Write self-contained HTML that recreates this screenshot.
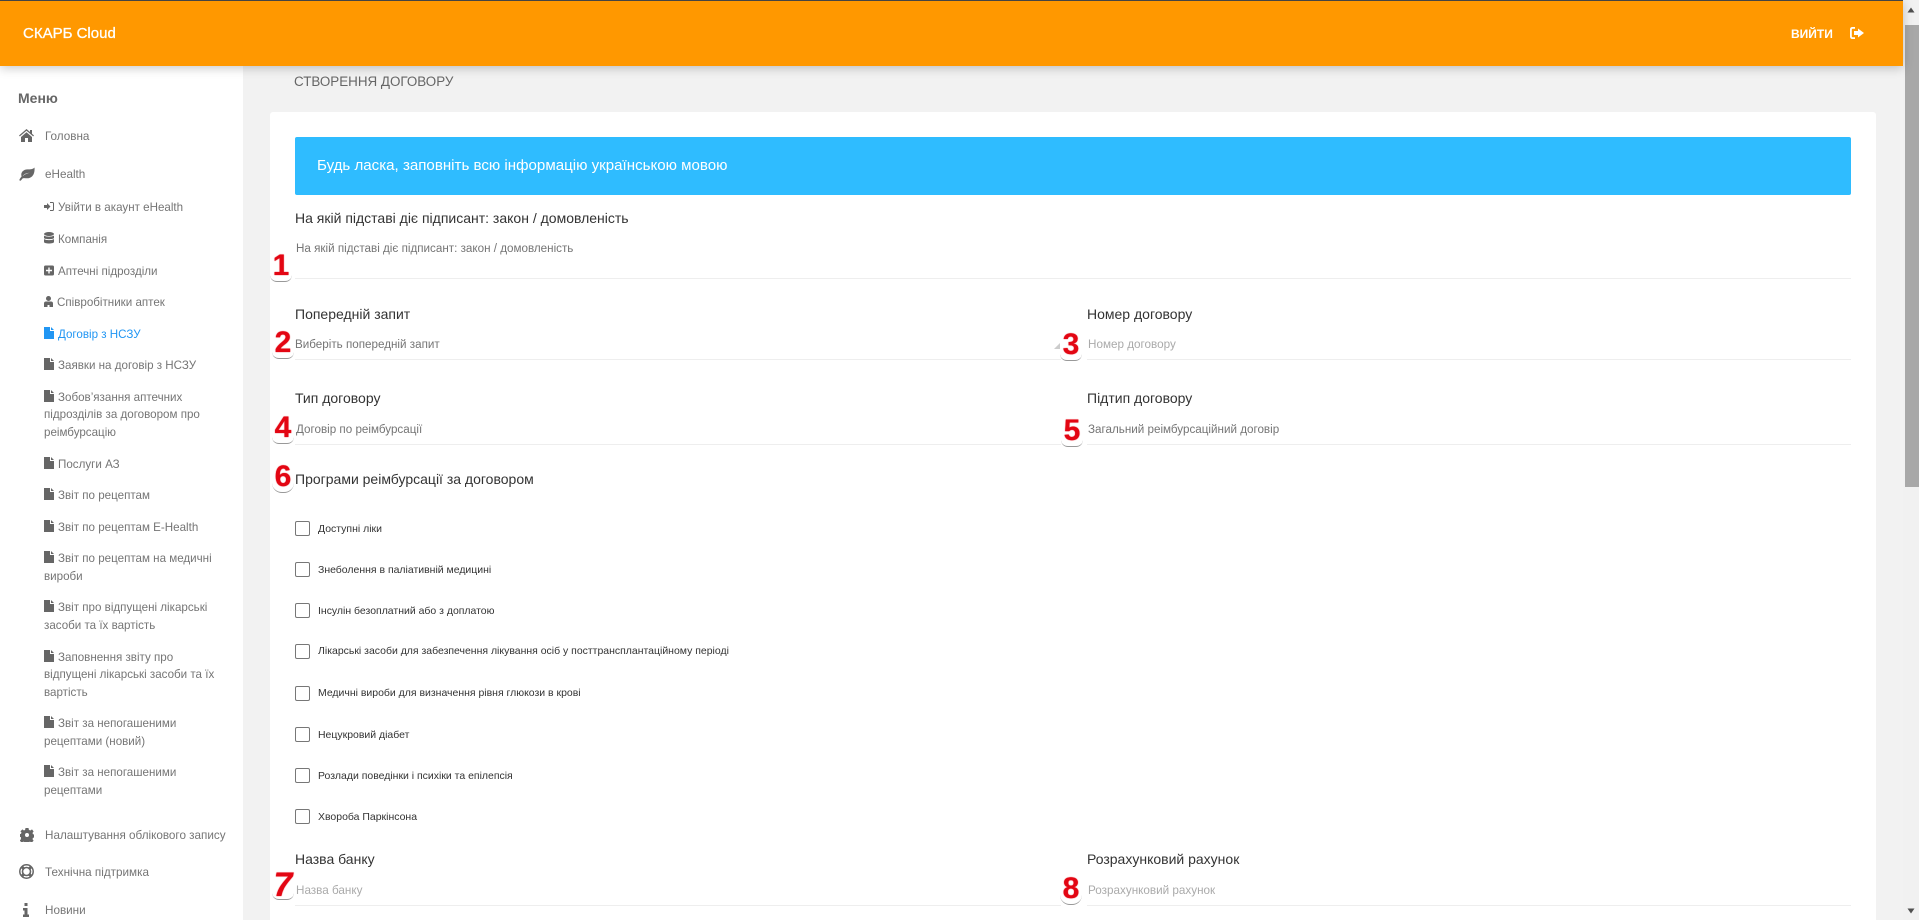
<!DOCTYPE html>
<html lang="uk">
<head>
<meta charset="utf-8">
<title>СКАРБ Cloud</title>
<style>
html,body{margin:0;padding:0;width:1919px;height:920px;overflow:hidden;background:#f2f2f2;font-family:"Liberation Sans","Noto Sans CJK SC",sans-serif}
.a{position:absolute}
.t{position:absolute;white-space:nowrap;line-height:18px;height:18px}
#hdr{left:0;top:0;width:1903px;height:66px;background:#ff9800;border-top:1px solid #444;box-sizing:border-box;box-shadow:0 2px 10px rgba(0,0,0,.22);z-index:3}
#side{left:0;top:66px;width:243px;height:854px;background:#fff}
#card{left:270px;top:112px;width:1606px;height:808px;background:#fff;border-radius:3px 3px 0 0}
#alert{left:295px;top:137px;width:1556px;height:58px;background:#2fbcff;border-radius:2px}
.m{font-size:11.7px;color:#757575}
.s{font-size:11.6px;color:#757575;left:44px}
.s svg{display:inline-block;vertical-align:-1px;margin-right:4px}
.l{font-size:14px;color:#333}
.v{font-size:11.65px;color:#757575}
.p{font-size:11.7px;color:#aaa}
.line{position:absolute;height:1px;background:#eee}
.cb{position:absolute;left:295px;width:13px;height:13px;border:1px solid #777;border-radius:2px;background:#fff}
.c{font-size:10.47px;color:#333;left:318px}
.n{position:absolute;width:22px;height:30px;font-size:30px;line-height:28px;font-weight:bold;color:#e30613;text-align:center;background:#fff;border-radius:0 0 7px 7px;border-bottom:1px solid #999;box-sizing:border-box;z-index:2;text-shadow:0 0 1px #e30613}
</style>
</head>
<body>
<div class="a" id="side"></div>
<div class="a" id="hdr"></div>
<div class="t" style="left:23px;top:25px;font-size:15px;color:#fff;z-index:4;-webkit-text-stroke:.3px #fff">СКАРБ Cloud</div>
<div class="t" style="left:1791px;top:25px;font-size:12px;font-weight:bold;color:#fff;z-index:4">ВИЙТИ</div>
<svg class="a" style="left:1849px;top:26px;z-index:4" width="16" height="14" viewBox="0 0 16 14"><path fill="#fff" d="M1 3.500Q1 1 3.500 1H6v1.800H3.600Q2.800 2.800 2.800 3.600v6.800q0 .8.8.8H6V13H3.500Q1 13 1 10.500zM9 2.500 15 7l-6 4.500V9H5V5h4z"/></svg>

<div class="t" style="left:18px;top:89px;font-size:14px;font-weight:bold;color:#666">Меню</div>

<svg class="a" style="left:19px;top:129px" width="15" height="13" viewBox="0 0 15 13"><path fill="#666" d="M7.500 0 11 3V1h2v3.700L15 6.500l-.8.9L7.500 1.700.8 7.400 0 6.500zM2 8l5.500-4.700L13 8v5H9V9H6v4H2z"/></svg>
<div class="t m" style="left:45px;top:128px">Головна</div>
<svg class="a" style="left:19px;top:167px" width="16" height="14" viewBox="0 0 16 14"><path fill="#666" fill-rule="evenodd" d="M15.500 .5C16 6 14 11 8.500 11.300 6.500 11.400 4.500 10.800 3.500 11.500L1.700 13.800.2 13.200C1 11.200 2 10.200 2.600 9.500 1.200 5.500 4.500 2.400 8.500 2.400 11.500 2.400 14 2.300 15.500.5ZM3.600 9.300C5.500 7.500 8 6.300 11 5.800 8 5.900 5 6.900 3.600 9.300Z"/></svg>
<div class="t m" style="left:45px;top:166px">eHealth</div>

<div class="t s" style="top:199px"><svg width="10" height="11" viewBox="0 0 10 11"><path fill="#666" d="M0 4h3V2l3.500 3.500L3 9V7H0zM6 1h2.500Q10 1 10 2.500v6Q10 10 8.500 10H6V9h2.500q.5 0 .5-.5v-6q0-.5-.5-.5H6z"/></svg>Увійти в акаунт eHealth</div>
<div class="t s" style="top:231px"><svg width="10" height="12" viewBox="0 0 10 12"><ellipse cx="5" cy="2" rx="5" ry="2" fill="#666"/><path fill="#666" d="M0 3.500C1.500 5 8.500 5 10 3.500V6C10 7.500 0 7.500 0 6ZM0 7C1.500 8.500 8.500 8.500 10 7V10C10 12 0 12 0 10Z"/></svg>Компанія</div>
<div class="t s" style="top:263px"><svg width="10" height="11" viewBox="0 0 10 11"><path fill="#666" fill-rule="evenodd" d="M1.500.5h7Q10 .5 10 2v7q0 1.500-1.500 1.500h-7Q0 10.500 0 9V2Q0 .5 1.500.5zM4.300 2.500v2.300H2v1.400h2.300v2.300h1.400V6.200H8V4.800H5.700V2.500z"/></svg>Аптечні підрозділи</div>
<div class="t s" style="top:294px"><svg width="9" height="11" viewBox="0 0 9 11"><path fill="#666" d="M4.500 0a2.500 2.500 0 1 1 0 5 2.500 2.500 0 0 1 0-5zM0 11V7.500Q0 5.500 2 5.500h5Q9 5.500 9 7.500V11H5.500V9h-2v2z"/></svg>Співробітники аптек</div>
<div class="t s" style="top:326px;color:#2196f3"><svg width="10" height="12" viewBox="0 0 10 12"><path fill="#2196f3" d="M0 0h6v4h4v8H0zM7 0l3 3H7z"/></svg>Договір з НСЗУ</div>
<div class="t s" style="top:357px"><svg width="10" height="12" viewBox="0 0 10 12"><path fill="#666" d="M0 0h6v4h4v8H0zM7 0l3 3H7z"/></svg>Заявки на договір з НСЗУ</div>
<div class="t s" style="top:389px"><svg width="10" height="12" viewBox="0 0 10 12"><path fill="#666" d="M0 0h6v4h4v8H0zM7 0l3 3H7z"/></svg>Зобов’язання аптечних</div>
<div class="t s" style="top:406px">підрозділів за договором про</div>
<div class="t s" style="top:424px">реімбурсацію</div>
<div class="t s" style="top:456px"><svg width="10" height="12" viewBox="0 0 10 12"><path fill="#666" d="M0 0h6v4h4v8H0zM7 0l3 3H7z"/></svg>Послуги АЗ</div>
<div class="t s" style="top:487px"><svg width="10" height="12" viewBox="0 0 10 12"><path fill="#666" d="M0 0h6v4h4v8H0zM7 0l3 3H7z"/></svg>Звіт по рецептам</div>
<div class="t s" style="top:519px"><svg width="10" height="12" viewBox="0 0 10 12"><path fill="#666" d="M0 0h6v4h4v8H0zM7 0l3 3H7z"/></svg>Звіт по рецептам E-Health</div>
<div class="t s" style="top:550px"><svg width="10" height="12" viewBox="0 0 10 12"><path fill="#666" d="M0 0h6v4h4v8H0zM7 0l3 3H7z"/></svg>Звіт по рецептам на медичні</div>
<div class="t s" style="top:568px">вироби</div>
<div class="t s" style="top:599px"><svg width="10" height="12" viewBox="0 0 10 12"><path fill="#666" d="M0 0h6v4h4v8H0zM7 0l3 3H7z"/></svg>Звіт про відпущені лікарські</div>
<div class="t s" style="top:617px">засоби та їх вартість</div>
<div class="t s" style="top:649px"><svg width="10" height="12" viewBox="0 0 10 12"><path fill="#666" d="M0 0h6v4h4v8H0zM7 0l3 3H7z"/></svg>Заповнення звіту про</div>
<div class="t s" style="top:666px">відпущені лікарські засоби та їх</div>
<div class="t s" style="top:684px">вартість</div>
<div class="t s" style="top:715px"><svg width="10" height="12" viewBox="0 0 10 12"><path fill="#666" d="M0 0h6v4h4v8H0zM7 0l3 3H7z"/></svg>Звіт за непогашеними</div>
<div class="t s" style="top:733px">рецептами (новий)</div>
<div class="t s" style="top:764px"><svg width="10" height="12" viewBox="0 0 10 12"><path fill="#666" d="M0 0h6v4h4v8H0zM7 0l3 3H7z"/></svg>Звіт за непогашеними</div>
<div class="t s" style="top:782px">рецептами</div>

<svg class="a" style="left:20px;top:828px" width="14" height="14" viewBox="0 0 14 14"><path fill="#666" fill-rule="evenodd" d="M5.500 0h3l.4 1.900 1.400.6L12 1.400l1.600 2-1.100 1.600.5 1.300 2 .3v2.800l-2 .4-.5 1.300 1.100 1.600-2 2-1.600-1.100-1.400.6-.4 1.800h-3l-.4-1.800-1.400-.6-1.600 1.100-2-2 1.100-1.600L1 9.200-.5 8.800V6.200L1 5.800l.5-1.300L.4 3.400l2-2L4 2.500l1.100-.6zM7 5a2 2 0 1 0 0 4 2 2 0 0 0 0-4z"/></svg>
<div class="t m" style="left:45px;top:827px">Налаштування облікового запису</div>
<svg class="a" style="left:19px;top:864px" width="15" height="15" viewBox="0 0 15 15"><path stroke="#666" stroke-width="3" d="M2.500 2.500l10 10M12.500 2.500l-10 10"/><circle cx="7.500" cy="7.500" r="4" fill="#fff" stroke="#666" stroke-width="1.600"/><circle cx="7.500" cy="7.500" r="6.700" fill="none" stroke="#666" stroke-width="1.500"/></svg>
<div class="t m" style="left:45px;top:864px">Технічна підтримка</div>
<svg class="a" style="left:23px;top:903px" width="6" height="14" viewBox="0 0 6 14"><path fill="#666" d="M1.500 0h3v3h-3zM0 5h4.500v6.500H6V14H0v-2.500h1.500V7.500H0z"/></svg>
<div class="t m" style="left:45px;top:902px">Новини</div>

<div class="t" style="left:294px;top:73px;font-size:13.4px;color:#666">СТВОРЕННЯ ДОГОВОРУ</div>
<div class="a" id="card"></div>
<div class="a" id="alert"></div>
<div class="t" style="left:317px;top:157px;font-size:15.1px;color:#fff">Будь ласка, заповніть всю інформацію українською мовою</div>

<div class="t l" style="left:295px;top:209px">На якій підставі діє підписант: закон / домовленість</div>
<div class="t v" style="left:296px;top:240px">На якій підставі діє підписант: закон / домовленість</div>
<div class="line" style="left:295px;top:278px;width:1556px"></div>

<div class="t l" style="left:295px;top:305px">Попередній запит</div>
<div class="t v" style="left:295px;top:336px">Виберіть попередній запит</div>
<div class="line" style="left:295px;top:359px;width:766px"></div>
<svg class="a" style="left:1053px;top:342px" width="8" height="8" viewBox="0 0 8 8"><path fill="#ccc" d="M7 1v6H1z"/></svg>
<div class="t l" style="left:1087px;top:305px">Номер договору</div>
<div class="t p" style="left:1088px;top:336px">Номер договору</div>
<div class="line" style="left:1087px;top:359px;width:764px"></div>

<div class="t l" style="left:295px;top:389px">Тип договору</div>
<div class="t v" style="left:296px;top:421px">Договір по реімбурсації</div>
<div class="line" style="left:295px;top:444px;width:766px"></div>
<div class="t l" style="left:1087px;top:389px">Підтип договору</div>
<div class="t v" style="left:1088px;top:421px">Загальний реімбурсаційний договір</div>
<div class="line" style="left:1087px;top:444px;width:764px"></div>

<div class="t l" style="left:295px;top:470px">Програми реімбурсації за договором</div>

<div class="cb" style="top:521px"></div><div class="t c" style="top:521px">Доступні ліки</div>
<div class="cb" style="top:562px"></div><div class="t c" style="top:562px">Знеболення в паліативній медицині</div>
<div class="cb" style="top:603px"></div><div class="t c" style="top:603px">Інсулін безоплатний або з доплатою</div>
<div class="cb" style="top:644px"></div><div class="t c" style="top:643px">Лікарські засоби для забезпечення лікування осіб у посттрансплантаційному періоді</div>
<div class="cb" style="top:686px"></div><div class="t c" style="top:685px">Медичні вироби для визначення рівня глюкози в крові</div>
<div class="cb" style="top:727px"></div><div class="t c" style="top:727px">Нецукровий діабет</div>
<div class="cb" style="top:768px"></div><div class="t c" style="top:768px">Розлади поведінки і психіки та епілепсія</div>
<div class="cb" style="top:809px"></div><div class="t c" style="top:809px">Хвороба Паркінсона</div>

<div class="t l" style="left:295px;top:850px">Назва банку</div>
<div class="t p" style="left:296px;top:882px">Назва банку</div>
<div class="line" style="left:295px;top:905px;width:766px"></div>
<div class="t l" style="left:1087px;top:850px">Розрахунковий рахунок</div>
<div class="t p" style="left:1088px;top:882px">Розрахунковий рахунок</div>
<div class="line" style="left:1087px;top:905px;width:764px"></div>

<div class="n" style="left:270px;top:252px">1</div>
<div class="n" style="left:272px;top:329px">2</div>
<div class="n" style="left:1060px;top:331px">3</div>
<div class="n" style="left:272px;top:414px">4</div>
<div class="n" style="left:1061px;top:417px">5</div>
<div class="n" style="left:272px;top:463px;border-radius:0 0 10px 10px">6</div>
<div class="n" style="left:272px;top:870px;font-style:italic;font-size:34px;line-height:30px">7</div>
<div class="n" style="left:1060px;top:875px;border-radius:0 0 10px 10px">8</div>

<div class="a" style="left:1903px;top:0;width:16px;height:920px;background:#f1f1f1"></div>
<div class="a" style="left:1905px;top:25px;width:14px;height:462px;background:#a8a8a8"></div>
<svg class="a" style="left:1907px;top:6px" width="8" height="8" viewBox="0 0 8 8"><path fill="#505050" d="M4 1.500 7.500 6.500H.5z"/></svg>
<svg class="a" style="left:1907px;top:907px" width="8" height="8" viewBox="0 0 8 8"><path fill="#505050" d="M.5 1.500h7L4 6.500z"/></svg>
</body>
</html>
